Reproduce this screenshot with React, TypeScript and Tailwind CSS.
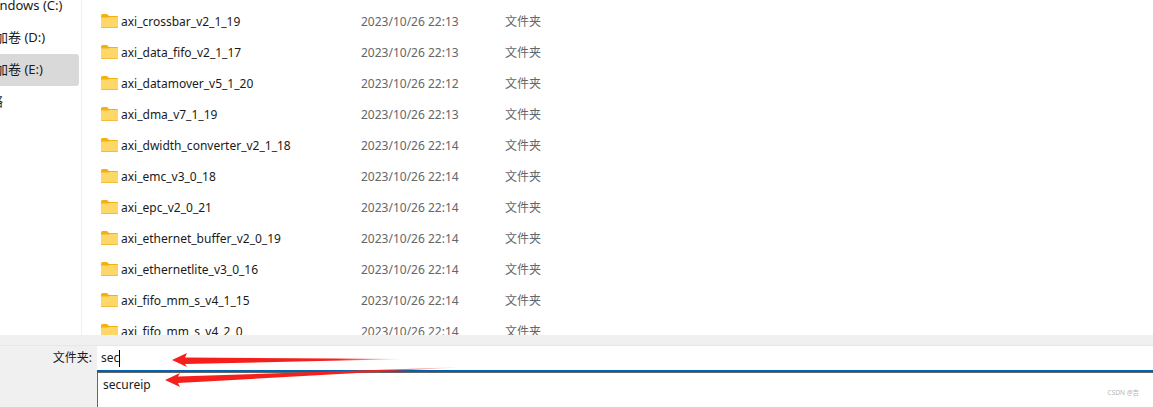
const rows: [string, string][] = [
  ["axi_crossbar_v2_1_19", "2023/10/26 22:13"],
  ["axi_data_fifo_v2_1_17", "2023/10/26 22:13"],
  ["axi_datamover_v5_1_20", "2023/10/26 22:12"],
  ["axi_dma_v7_1_19", "2023/10/26 22:13"],
  ["axi_dwidth_converter_v2_1_18", "2023/10/26 22:14"],
  ["axi_emc_v3_0_18", "2023/10/26 22:14"],
  ["axi_epc_v2_0_21", "2023/10/26 22:14"],
  ["axi_ethernet_buffer_v2_0_19", "2023/10/26 22:14"],
  ["axi_ethernetlite_v3_0_16", "2023/10/26 22:14"],
  ["axi_fifo_mm_s_v4_1_15", "2023/10/26 22:14"],
  ["axi_fifo_mm_s_v4_2_0", "2023/10/26 22:14"],
];

const font = "font-['Noto_Sans','Noto_Sans_CJK_SC',sans-serif]";

function Folder() {
  return (
    <svg width="17" height="14" viewBox="0 0 17 14" className="shrink-0">
      <path d="M0 2 Q0 0 1.5 0 H6 L8 2 H16 Q17 2 17 3 V6 H0 Z" fill="#f2b10f" />
      <path d="M0 3.5 H7.5 L9 3 H16 Q17 3 17 4 V13 Q17 14 16 14 H1 Q0 14 0 13 Z" fill="#fdd768" />
      <path d="M0 13 H17 V13.2 Q17 14 16 14 H1 Q0 14 0 13.2 Z" fill="#f3bc3e" />
    </svg>
  );
}

export default function App() {
  return (
    <div className={`relative w-[1153px] h-[407px] overflow-hidden bg-white ${font}`}>
      <div className="flex h-[335px] overflow-hidden">
        <div className="w-[82px] shrink-0 border-r border-[#f0f0f0] -mt-[10px] flex flex-col">
          <div className="h-[32px] flex items-center overflow-hidden w-[79px]"><span className="text-[13px] text-[#1a1a1a] whitespace-nowrap ml-[-16px]">Windows (C:)</span></div>
          <div className="h-[32px] flex items-center overflow-hidden w-[79px]"><span className="text-[13px] text-[#1a1a1a] whitespace-nowrap ml-[-18px]">新加卷 (D:)</span></div>
          <div className="h-[32px] flex items-center overflow-hidden w-[79px] bg-[#d9d9d9] rounded-r-[3px]"><span className="text-[13px] text-[#1a1a1a] whitespace-nowrap ml-[-18px]">新加卷 (E:)</span></div>
          <div className="h-[32px] flex items-center overflow-hidden w-[79px]"><span className="text-[13px] text-[#1a1a1a] whitespace-nowrap ml-[-23px]">网络</span></div>
        </div>
        <div className="flex-1 pt-[6px] pl-[19px]">
          {rows.map(([name, date]) => (
            <div key={name} className="h-[31px] flex items-center text-[12px]">
              <div className="w-[260px] flex items-center gap-[3px] -translate-y-[1px]">
                <Folder />
                <span className="text-[#1a1a1a] whitespace-nowrap translate-y-[1px]">{name}</span>
              </div>
              <span className="w-[144px] text-[#666666] whitespace-nowrap">{date}</span>
              <span className="text-[#666666]">文件夹</span>
            </div>
          ))}
        </div>
      </div>
      <div className="h-[72px] bg-[#f0f0f0]">
        <div className="h-[11px] border-b border-[#e6e6e6]" />
        <div className="flex h-[24px]">
          <div className="w-[97px] flex justify-end items-center pr-[5px] text-[12px] text-[#1a1a1a]">文件夹:</div>
          <div className="flex-1 bg-white flex items-center pl-[4px] text-[12px] text-[#1a1a1a]">
            <span>sec</span>
            <span className="w-px h-[17px] bg-black" />
          </div>
        </div>
        <div className="h-[2px] ml-[97px] bg-[#0063b1]" />
        <div className="h-px ml-[97px] bg-[#666666]" />
        <div className="relative h-[34px] ml-[97px] bg-white border-l border-[#666666] pl-[5px] pt-[3px] text-[12px] text-[#1a1a1a]">
          secureip
          <span className="absolute right-[14px] top-[15px] text-[6.5px] text-[#b5b5b5]">CSDN @吉</span>
        </div>
      </div>
      <svg className="absolute left-0 top-0 pointer-events-none" width="1153" height="407">
        <defs>
          <linearGradient id="a1" x1="172" x2="408" y1="0" y2="0" gradientUnits="userSpaceOnUse">
            <stop offset="0" stopColor="#f5201c" />
            <stop offset="0.7" stopColor="#f5201c" />
            <stop offset="1" stopColor="#f5201c" stopOpacity="0" />
          </linearGradient>
          <linearGradient id="a2" x1="165" x2="465" y1="0" y2="0" gradientUnits="userSpaceOnUse">
            <stop offset="0" stopColor="#f5201c" />
            <stop offset="0.7" stopColor="#f5201c" />
            <stop offset="1" stopColor="#f5201c" stopOpacity="0" />
          </linearGradient>
        </defs>
        <path d="M172 360 L187 353 L185 357.5 L408 359 L185 364 L187 367 Z" fill="url(#a1)" />
        <path d="M165 380 L180 373 L178 376.5 L465 367 L178 383 L180 387 Z" fill="url(#a2)" />
      </svg>
    </div>
  );
}
